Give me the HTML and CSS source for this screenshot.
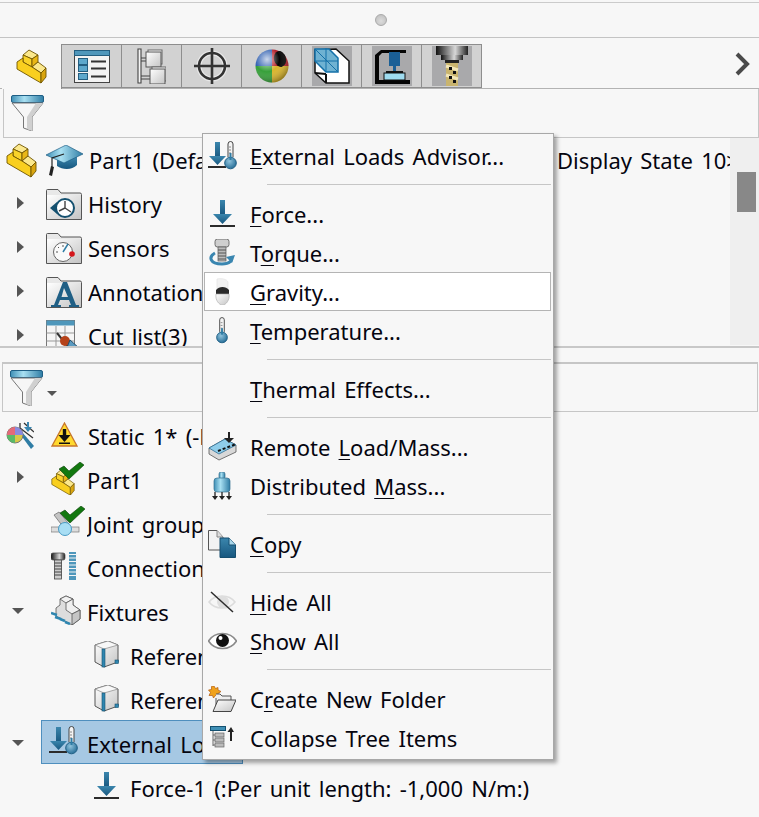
FILE: index.html
```html
<!DOCTYPE html>
<html lang="en">
<head>
<meta charset="utf-8">
<title>Simulation tree</title>
<link rel="stylesheet" href="styles.css">
</head>
<body>
<svg class="defs" width="0" height="0" aria-hidden="true">
  <defs>
    <linearGradient id="gb" x1="0" y1="0" x2="0" y2="1"><stop offset="0" stop-color="#3b86ad"/><stop offset="1" stop-color="#17577f"/></linearGradient>
    <linearGradient id="gf" x1="0" y1="0" x2="1" y2="0"><stop offset="0" stop-color="#3f8fb5"/><stop offset=".4" stop-color="#a9e0f2"/><stop offset="1" stop-color="#2f7da5"/></linearGradient>
    <linearGradient id="gw" x1="0" y1="0" x2="1" y2="1"><stop offset="0" stop-color="#ffffff"/><stop offset="1" stop-color="#c4c4c4"/></linearGradient>
    <linearGradient id="gc" x1="0" y1="0" x2="1" y2="0"><stop offset="0" stop-color="#111"/><stop offset=".6" stop-color="#d8d8d8"/><stop offset="1" stop-color="#222"/></linearGradient>
    <radialGradient id="gball" cx=".35" cy=".3" r=".75"><stop offset="0" stop-color="#fff" stop-opacity=".75"/><stop offset=".5" stop-color="#fff" stop-opacity="0"/><stop offset="1" stop-color="#000" stop-opacity=".35"/></radialGradient>
    <radialGradient id="gbulb" cx=".4" cy=".35" r=".7"><stop offset="0" stop-color="#8fc3dd"/><stop offset="1" stop-color="#226a94"/></radialGradient>

    <symbol id="part" viewBox="0 0 31 35">
      <g stroke="#6f5500" stroke-width=".9" stroke-linejoin="round">
        <polygon points="7,6 13,1 22,6 16,10" fill="#fbe88c"/>
        <polygon points="7,6 16,10 16,18 7,13" fill="#f9d32a"/>
        <polygon points="16,10 22,6 22,13 16,18" fill="#e9b716"/>
        <polygon points="16,18 22,13 30,19 25,24" fill="#fbe88c"/>
        <polygon points="1,13 7,9 7,13 16,18 25,24 25,34 1,20" fill="#f9cf1f"/>
        <polygon points="25,24 30,19 30,28 25,34" fill="#d9a50f"/>
      </g>
    </symbol>
    <symbol id="check" viewBox="0 0 25 17">
      <polygon points="0,7 5,4 10,9 21,0 25,3 10,17" fill="#12780f" stroke="#0b3f0a" stroke-width=".6"/>
    </symbol>
    <symbol id="funnel" viewBox="0 0 33 36">
      <rect x=".5" y=".5" width="32" height="7" rx="1.5" fill="url(#gf)" stroke="#1f5f85"/>
      <path d="M1 8 L12.500 22 V33 L21 36 V22 L32 8 Z" fill="#f6f6f6" stroke="#777"/>
      <path d="M21 22 L32 8 H25 L16 22 V34 L21 36 Z" fill="#d0d0d0"/>
    </symbol>
    <symbol id="thermo" viewBox="0 0 13 29">
      <path d="M4 16 V3 a2.500 2.500 0 0 1 5 0 V16" fill="#f4f4f4" stroke="#444"/>
      <path d="M5 6h2M5 9h2M5 12h2" stroke="#888"/>
      <circle cx="6.500" cy="22" r="5.800" fill="url(#gbulb)" stroke="#1f5f85"/>
      <rect x="5.500" y="12" width="2" height="7" fill="#2f7da5"/>
    </symbol>
    <symbol id="force" viewBox="0 0 25 28">
      <rect x="10" y="0" width="5" height="15" fill="url(#gb)"/>
      <polygon points="3,14 22,14 12.500,24" fill="url(#gb)"/>
      <rect x="0" y="25" width="25" height="2" fill="#2b2b2b"/>
    </symbol>
    <symbol id="extload" viewBox="0 0 29 29">
      <rect x="7" y="1" width="5" height="16" fill="url(#gb)"/>
      <polygon points="1,15 18,15 9.500,24" fill="url(#gb)"/>
      <rect x="0" y="25" width="18" height="2" fill="#2b2b2b"/>
      <use href="#thermo" x="16" y="0" width="13" height="29"/>
    </symbol>
    <symbol id="torque" viewBox="0 0 26 27">
      <rect x="6" y="0" width="14" height="8" rx="2.500" fill="#cfcfcf" stroke="#555" stroke-width=".8"/>
      <rect x="9" y="8" width="8" height="14" fill="#bbb" stroke="#555" stroke-width=".7"/>
      <path d="M9 11h8M9 14h8M9 17h8M9 20h8" stroke="#555"/>
      <path d="M6 14 C-1 18 1 25 13 25 C21 25 24 21 22 18" fill="none" stroke="#3a86b0" stroke-width="3"/>
      <polygon points="17,18 26,16 23,24" fill="#3a86b0"/>
    </symbol>
    <symbol id="gravity" viewBox="0 0 15 27">
      <path d="M2 1 C6 0 12 1 13 4 L13 11 L2 11 Z" fill="#f2f2f2" stroke="#e4e4e4" stroke-width=".7"/>
      <path d="M1 12 C4 8 11 8 14 12 L14 16 L1 16 Z" fill="#2a2a2a"/>
      <path d="M1 16 H14 C15 22 11 27 7.500 27 C4 27 0 22 1 16 Z" fill="url(#gw)" stroke="#aaa" stroke-width=".6"/>
    </symbol>
    <symbol id="remote" viewBox="0 0 29 29">
      <polygon points="1,16 17,7 28,13 28,20 11,28 1,22" fill="#d8d8d8" stroke="#555" stroke-width=".8"/>
      <polygon points="1,16 17,7 28,13 11,22" fill="#8fcdea" stroke="#2f6f95" stroke-width=".8"/>
      <path d="M10 19 L28 12" stroke="#111" stroke-width="2" stroke-dasharray="3 2"/>
      <path d="M21 0 V8" stroke="#222" stroke-width="2"/>
      <polygon points="16,6 26,6 21,11" fill="#222"/>
    </symbol>
    <symbol id="dist" viewBox="0 0 20 28">
      <rect x="7" y="0" width="6" height="7" rx="2" fill="url(#gf)" stroke="#33708f" stroke-width=".7"/>
      <rect x="2" y="6" width="16" height="14" rx="3" fill="url(#gf)" stroke="#33708f" stroke-width=".7"/>
      <path d="M3 20 V25 M10 20 V25 M17 20 V25" stroke="#222" stroke-width="1.300"/>
      <path d="M0 24 H6 L3 28Z M7 24 H13 L10 28Z M14 24 H20 L17 28Z" fill="#222"/>
    </symbol>
    <symbol id="copy" viewBox="0 0 28 28">
      <path d="M.5 .5 H9 L15 7 V20 H.5 Z" fill="#f3f3f3" stroke="#555"/>
      <path d="M9 .5 V7 H15" fill="#ddd" stroke="#888"/>
      <path d="M12 8 H21 L27.500 15 V27.500 H12 Z" fill="url(#gb)" stroke="#164f70"/>
      <path d="M21 8 V15 H27.500" fill="#a9d6ea" stroke="#164f70"/>
    </symbol>
    <symbol id="eye" viewBox="0 0 29 20">
      <path d="M.5 10 C7 0 22 0 28.500 10 C22 20 7 20 .5 10 Z" fill="#fff" stroke="#8a8a8a" stroke-width="1.600"/>
      <circle cx="14.500" cy="9.500" r="6.500" fill="#111"/>
      <circle cx="12.500" cy="7" r="2" fill="#fff"/>
    </symbol>
    <symbol id="hide" viewBox="0 0 28 22">
      <path d="M1 11 C7 3 21 3 27 11 C21 19 7 19 1 11 Z" fill="#f6f6f6" stroke="#dcdcdc" stroke-width="1.600"/>
      <circle cx="15" cy="11" r="6" fill="#dedede"/>
      <path d="M3 1 L25 21" stroke="#2c2c2c" stroke-width="1.500"/>
    </symbol>
    <symbol id="newf" viewBox="0 0 28 26">
      <path d="M6 0 L7.500 2.500 L10 1.500 L10 4 L13 5.500 L10 7.500 L10.500 10.500 L7.500 9.500 L5.500 12 L4.500 9.500 L1 9.500 L2.500 6.500 L.5 4 L3.500 3.500 L3.500 .5 Z" fill="#f0a21c" stroke="#b25a10" stroke-width=".7"/>
      <path d="M8 13 V26 H23 L23 11 H14 L12 9 H8" fill="#eee" stroke="#555" transform="translate(0,-1)"/>
      <path d="M10 14 H28 L23 25.500 H5 Z" fill="url(#gw)" stroke="#444"/>
    </symbol>
    <symbol id="collapse" viewBox="0 0 24 23">
      <rect x=".5" y=".5" width="15" height="4" fill="#3f8fb5" stroke="#14506f"/>
      <path d="M3 5 V20 M3 9 H5 M3 14 H5 M3 19 H5" stroke="#666" fill="none"/>
      <rect x="5" y="7" width="9" height="4" fill="#bbb" stroke="#666" stroke-width=".7"/>
      <rect x="5" y="12" width="9" height="4" fill="#bbb" stroke="#666" stroke-width=".7"/>
      <rect x="5" y="17" width="9" height="4" fill="#bbb" stroke="#666" stroke-width=".7"/>
      <rect x="20" y="5" width="2" height="10" fill="#222"/>
      <polygon points="17.500,6 24,6 21,1" fill="#222"/>
    </symbol>
    <symbol id="folder" viewBox="0 0 36 31">
      <path d="M.5 30.500 V1.500 Q.5 .5 1.500 .5 H12 L15 4 H34 Q35.500 4 35.500 5.500 V30.500 Z" fill="#e8e8e8" stroke="#555"/>
      <rect x="1" y="6" width="34" height="24" fill="url(#gw)"/>
    </symbol>
    <symbol id="refcube" viewBox="0 0 25 27">
      <polygon points="1,4 14,0 24,4 24,21 10,26 1,21" fill="url(#gw)" stroke="#555"/>
      <polygon points="1,4 10,8 24,4 14,0" fill="#f8f8f8" stroke="#888" stroke-width=".7"/>
      <rect x="8" y="8" width="3" height="18" fill="#2f86b0" stroke="#14506f" stroke-width=".6"/>
      <rect x="21" y="19" width="3.500" height="3.500" fill="#2f86b0" stroke="#14506f" stroke-width=".6"/>
    </symbol>
  </defs>
</svg>

<header class="grip-bar"><span class="grip"></span></header>

<nav class="tabs">
  <div class="tab tab-active"><svg class="part-tab" width="31" height="35"><use href="#part"/></svg></div>
  <div class="tab">
    <svg width="36" height="33" viewBox="0 0 36 33">
      <rect x=".5" y=".5" width="35" height="32" fill="#f3f3f3" stroke="#444"/>
      <rect x=".5" y=".5" width="35" height="5" fill="#4f97bb" stroke="#245e80"/>
      <g fill="#5ea8cc" stroke="#245e80"><rect x="4.500" y="8.500" width="9" height="6"/><rect x="4.500" y="15.500" width="9" height="6"/><rect x="4.500" y="23.500" width="9" height="6"/></g>
      <path d="M17 11.500H32M17 18.500H32M17 26.500H32" stroke="#333" stroke-width="2"/>
    </svg>
  </div>
  <div class="tab">
    <svg width="29" height="36" viewBox="0 0 29 36">
      <path d="M1 1 H4 V35 H1 Z M4 10 H10 M4 28 H13" fill="#f4f4f4" stroke="#444" stroke-width="1.100"/>
      <path d="M4 13 H10 M4 31 H13" stroke="#444"/>
      <rect x="11" y="2" width="14" height="14" fill="#fff" stroke="#666"/>
      <rect x="9" y="4" width="15" height="15" fill="url(#gw)" stroke="#555"/>
      <rect x="15" y="19" width="14" height="14" fill="#fff" stroke="#666"/>
      <rect x="13" y="21" width="15" height="15" fill="url(#gw)" stroke="#555"/>
    </svg>
  </div>
  <div class="tab">
    <svg width="38" height="38" viewBox="0 0 38 38">
      <circle cx="19" cy="19" r="13" fill="none" stroke="#fff" stroke-width="5" opacity=".5"/>
      <circle cx="19" cy="19" r="13" fill="none" stroke="#333" stroke-width="2.600"/>
      <path d="M19 1 V37 M1 19 H37" stroke="#333" stroke-width="2.600"/>
    </svg>
  </div>
  <div class="tab">
    <svg width="34" height="34" viewBox="0 0 34 34">
      <path d="M17 17 L17 .5 A16.500 16.500 0 0 0 .5 17 Z" fill="#2f5fb0"/>
      <path d="M17 17 L.5 17 A16.500 16.500 0 0 0 17 33.500 Z" fill="#37a03a"/>
      <path d="M17 17 L17 33.500 A16.500 16.500 0 0 0 33.500 17 Z" fill="#d9b52c"/>
      <path d="M17 17 L33.500 17 A16.500 16.500 0 0 0 17 .5 Z" fill="#b3202a"/>
      <ellipse cx="25" cy="10" rx="6" ry="8" transform="rotate(-15 25 10)" fill="#070707"/>
      <circle cx="17" cy="17" r="16.500" fill="url(#gball)"/>
    </svg>
  </div>
  <div class="tab">
    <span class="tile">
      <svg width="40" height="40" viewBox="0 0 40 40">
        <polygon points="3,4 24,3 37,15 37,37 14,37 3,27" fill="#fff" stroke="#111" stroke-width="1.500"/>
        <path d="M14 37 V28 M3 27 L14 28" stroke="#111" stroke-width="2"/>
        <polygon points="3,3 17,3 26,12 26,26 14,26 3,15" fill="#6fb2d2" stroke="#1470a8" stroke-width="1.500"/>
        <path d="M3 3 L26 26 M14 2 V26 M3 15 H26" stroke="#1470a8" stroke-width="1"/>
      </svg>
    </span>
  </div>
  <div class="tab">
    <span class="tile">
      <svg width="40" height="40" viewBox="0 0 40 40">
        <path d="M34 4 H9 L3 9 V38 H38 V34 H7 V10 L10 7 H34 Z" fill="#050505"/>
        <rect x="17" y="6" width="11" height="14" fill="#1a5f96"/>
        <rect x="21" y="20" width="3" height="6" fill="#1a5f96"/>
        <rect x="14" y="25" width="17" height="2" fill="#111"/>
        <rect x="12" y="27" width="21" height="7" fill="#9fdcf0" stroke="#111"/>
      </svg>
    </span>
  </div>
  <div class="tab">
    <span class="tile">
      <svg width="40" height="40" viewBox="0 0 40 40">
        <rect x="4" y="0" width="32" height="9" fill="url(#gc)"/>
        <rect x="9" y="9" width="22" height="5" fill="url(#gc)"/>
        <rect x="13" y="14" width="14" height="3" fill="#222"/>
        <rect x="14" y="17" width="12" height="23" fill="#c9b46e"/>
        <path d="M14 20 L26 24 M14 29 L26 33" stroke="#f3e7b8" stroke-width="3"/>
        <path d="M17 21 h3 v3 h-3z M21 25 h3 v3 h-3z M17 30 h3 v3 h-3z M21 34 h3 v3 h-3z" fill="#111"/>
      </svg>
    </span>
  </div>
  <svg class="chevron" width="15" height="24" viewBox="0 0 15 24"><path d="M2 2 L12 12 L2 22" fill="none" stroke="#4a4a4a" stroke-width="4"/></svg>
</nav>

<div class="filter filter-top"><svg width="33" height="36"><use href="#funnel"/></svg></div>

<section class="tree tree-top">
  <div class="tree-rows">
    <div class="row">
      <span class="twist"><svg class="root-part" width="31" height="35"><use href="#part"/></svg></span>
      <span class="ico">
        <svg width="38" height="31" viewBox="0 0 38 31">
          <path d="M11 13 V21 C17 25 26 25 31 20 V12 Z" fill="url(#gb)"/>
          <polygon points="0,10 20,0 37,9 18,18" fill="url(#gf)" stroke="#1f5f85" stroke-width=".7"/>
          <path d="M18 9 L6 13 V22" stroke="#222" stroke-width="1.200" fill="none"/>
          <polygon points="5,21 8,22 6,31 3,30" fill="#222"/>
        </svg>
      </span>
      <span class="label clip clip-root">Part1 (Default</span>
      <span class="label label-state">Display State 10&gt;)</span>
    </div>
    <div class="row">
      <span class="twist"><i class="tri-r"></i></span>
      <span class="ico">
        <svg width="36" height="31" viewBox="0 0 36 31">
          <use href="#folder" width="36" height="31"/>
          <circle cx="19" cy="19" r="9" fill="#fff" stroke="#14506f" stroke-width="2"/>
          <polygon points="4,19 11,13 11,25" fill="#14506f"/>
          <path d="M19 19 V12 M19 19 L25 23 M19 19 L13 22" stroke="#444" stroke-width="1.400"/>
        </svg>
      </span>
      <span class="label">History</span>
    </div>
    <div class="row">
      <span class="twist"><i class="tri-r"></i></span>
      <span class="ico">
        <svg width="36" height="31" viewBox="0 0 36 31">
          <use href="#folder" width="36" height="31"/>
          <circle cx="17" cy="19" r="9.500" fill="#fafafa" stroke="#666"/>
          <path d="M17 19 L22 11" stroke="#2f7da5" stroke-width="1.500"/>
          <path d="M10 19h2M17 12v2M12 14l1 1" stroke="#555"/>
          <circle cx="26" cy="21" r="2.800" fill="#d4161c"/>
        </svg>
      </span>
      <span class="label">Sensors</span>
    </div>
    <div class="row">
      <span class="twist"><i class="tri-r"></i></span>
      <span class="ico">
        <svg width="36" height="31" viewBox="0 0 36 31">
          <use href="#folder" width="36" height="31"/>
          <path d="M17 5 H21 L30 28 H33 V30 H23 V28 H25 L23 23 H14 L12 28 H15 V30 H5 V28 H8 Z M18 11 L15.500 20 H22 Z" fill="#1f5f85" fill-rule="evenodd"/>
        </svg>
      </span>
      <span class="label clip">Annotations</span>
    </div>
    <div class="row">
      <span class="twist"><i class="tri-r"></i></span>
      <span class="ico">
        <svg class="cut" width="34" height="36" viewBox="0 0 34 36">
          <rect x=".5" y=".5" width="28" height="30" fill="#f6f6f6" stroke="#777"/>
          <rect x=".5" y=".5" width="28" height="5" fill="#4f97bb"/>
          <path d="M.5 13H28M.5 21H28M10 6V31M19 6V31" stroke="#999"/>
          <path d="M11 13 L28 34" stroke="#333" stroke-width="2"/>
          <circle cx="19" cy="21" r="5" fill="#b5421a"/>
          <path d="M24 20 L33 28 L28 36 L20 30 Z" fill="#5a9ac0" stroke="#224f6d"/>
        </svg>
      </span>
      <span class="label">Cut list(3)</span>
    </div>
  </div>
  <div class="scroll"><span class="thumb"></span></div>
</section>

<div class="split"></div>

<div class="filter filter-bottom">
  <svg width="33" height="36"><use href="#funnel"/></svg>
  <i class="tri-small"></i>
</div>

<section class="tree tree-bottom">
  <div class="row">
    <span class="twist">
      <svg class="lens" width="28" height="29" viewBox="0 0 28 29">
        <path d="M14 14 L25 29 L28 26 L16 12" fill="#2f7da5"/>
        <path d="M14 8 L27 18 M18 3 L28 12 M14 3 V14" stroke="#333" stroke-width="1.300"/>
        <circle cx="9" cy="15" r="8" fill="#d7c94a" stroke="#777"/>
        <path d="M9 15 L9 7 A8 8 0 0 0 1 15 Z" fill="#e46a7a"/>
        <path d="M9 15 L1 15 A8 8 0 0 0 9 23 Z" fill="#5aba6a"/>
        <path d="M9 15 L17 15 A8 8 0 0 0 9 7 Z" fill="#8a8ae0"/>
        <path d="M22 2 V9" stroke="#3a86b0" stroke-width="2"/>
        <polygon points="18,7 26,7 22,12" fill="#3a86b0"/>
      </svg>
    </span>
    <span class="ico ico-warn">
      <svg width="27" height="25" viewBox="0 0 27 25">
        <polygon points="13.500,1 26,24 1,24" fill="#ffd92e" stroke="#c8762a" stroke-width="1.300"/>
        <rect x="11.800" y="7" width="3.400" height="8" fill="#111"/>
        <polygon points="7.500,13 19.500,13 13.500,20" fill="#111"/>
        <rect x="8" y="20.500" width="11" height="1.500" fill="#111"/>
      </svg>
    </span>
    <span class="label clip">Static 1* (-Default-)</span>
  </div>
  <div class="row row-b">
    <span class="twist"><i class="tri-r"></i></span>
    <span class="ico ico-b">
      <svg width="33" height="33" viewBox="0 0 33 33">
        <use href="#part" x="0" y="7" width="24" height="27"/>
        <use href="#check" x="8" y="0" width="25" height="17"/>
      </svg>
    </span>
    <span class="label">Part1</span>
  </div>
  <div class="row row-b">
    <span class="twist"></span>
    <span class="ico ico-b">
      <svg width="34" height="32" viewBox="0 0 34 32">
        <path d="M3 9 L8 6 L18 18 L13 22 Z" fill="#c4c4c4" stroke="#666" stroke-width=".7"/>
        <rect x="0" y="21" width="28" height="5" fill="#ddd" stroke="#777" stroke-width=".7"/>
        <circle cx="14" cy="23" r="6.500" fill="#a8def4" stroke="#4a9bc4"/>
        <use href="#check" x="9" y="0" width="25" height="17"/>
      </svg>
    </span>
    <span class="label clip">Joint groups</span>
  </div>
  <div class="row row-b">
    <span class="twist"></span>
    <span class="ico ico-b">
      <svg class="conn" width="27" height="28" viewBox="0 0 27 28">
        <rect x="0" y="1" width="14" height="7" rx="2" fill="url(#gc)" stroke="#444" stroke-width=".7"/>
        <rect x="3.500" y="8" width="7" height="19" fill="#ccc" stroke="#444" stroke-width=".8"/>
        <path d="M3.500 11h7M3.500 14h7M3.500 17h7M3.500 20h7M3.500 23h7" stroke="#444"/>
        <rect x="18" y="0" width="7" height="28" fill="#4f97bb"/>
        <path d="M18 2.500h8M18 6h8M18 9.500h8M18 13h8M18 16.500h8M18 20h8M18 23.500h8" stroke="#f4f4f4"/>
      </svg>
    </span>
    <span class="label clip">Connections</span>
  </div>
  <div class="row row-b">
    <span class="twist"><i class="tri-d"></i></span>
    <span class="ico ico-b">
      <svg class="fix" width="30" height="30" viewBox="0 0 30 30">
        <g fill="#ddd" stroke="#555" stroke-width=".8">
          <polygon points="9,4 15,1 22,4 22,10 29,15 29,24 21,30 5,21 5,13 9,10"/>
          <polygon points="9,4 15,8 22,4 15,1" fill="#f2f2f2"/>
          <polygon points="15,8 15,15 21,19 29,15 22,10 22,4" fill="#efefef"/>
          <polygon points="21,19 21,30 29,24 29,15" fill="#c5c5c5"/>
        </g>
        <path d="M0 18 L6 20 M4 22 L10 24 M9 24 L14 26 M14 27 L19 29" stroke="#2f86b0" stroke-width="2.500"/>
      </svg>
    </span>
    <span class="label">Fixtures</span>
  </div>
  <div class="row row-c">
    <span class="ico ico-c"><svg width="25" height="27"><use href="#refcube"/></svg></span>
    <span class="label clip clip-c">Reference Geometry-1</span>
  </div>
  <div class="row row-c">
    <span class="ico ico-c"><svg width="25" height="27"><use href="#refcube"/></svg></span>
    <span class="label clip clip-c">Reference Geometry-2</span>
  </div>
  <div class="row row-b">
    <span class="twist"><i class="tri-d"></i></span>
    <span class="selected">
      <span class="ico ico-s"><svg width="29" height="29"><use href="#extload"/></svg></span>
      <span class="label clip label-sel">External Loads</span>
    </span>
  </div>
  <div class="row row-c">
    <span class="ico ico-c"><svg width="25" height="28"><use href="#force"/></svg></span>
    <span class="label">Force-1 (:Per unit length: -1,000 N/m:)</span>
  </div>
</section>

<aside class="menu">
  <div class="item"><span class="mi"><svg width="29" height="29"><use href="#extload"/></svg></span><span><u>E</u>xternal Loads Advisor...</span></div>
  <div class="sep"></div>
  <div class="item"><span class="mi"><svg width="25" height="28"><use href="#force"/></svg></span><span><u>F</u>orce...</span></div>
  <div class="item"><span class="mi"><svg width="26" height="27"><use href="#torque"/></svg></span><span>T<u>o</u>rque...</span></div>
  <div class="item item-hover"><span class="mi"><svg width="15" height="27"><use href="#gravity"/></svg></span><span><u>G</u>ravity...</span></div>
  <div class="item"><span class="mi"><svg width="12" height="27"><use href="#thermo"/></svg></span><span><u>T</u>emperature...</span></div>
  <div class="sep"></div>
  <div class="item"><span class="mi"></span><span><u>T</u>hermal Effects...</span></div>
  <div class="sep"></div>
  <div class="item"><span class="mi"><svg width="29" height="29"><use href="#remote"/></svg></span><span>Remote <u>L</u>oad/Mass...</span></div>
  <div class="item"><span class="mi"><svg width="20" height="28"><use href="#dist"/></svg></span><span>Distributed <u>M</u>ass...</span></div>
  <div class="sep"></div>
  <div class="item"><span class="mi"><svg width="28" height="28"><use href="#copy"/></svg></span><span><u>C</u>opy</span></div>
  <div class="sep"></div>
  <div class="item"><span class="mi"><svg width="28" height="22"><use href="#hide"/></svg></span><span><u>H</u>ide All</span></div>
  <div class="item"><span class="mi"><svg width="29" height="20"><use href="#eye"/></svg></span><span><u>S</u>how All</span></div>
  <div class="sep"></div>
  <div class="item"><span class="mi"><svg width="28" height="26"><use href="#newf"/></svg></span><span>C<u>r</u>eate New Folder</span></div>
  <div class="item"><span class="mi"><svg width="24" height="23"><use href="#collapse"/></svg></span><span>Collapse Tree Items</span></div>
</aside>
</body>
</html>
```

FILE: styles.css
```css
* { box-sizing: border-box; }
html, body { margin: 0; padding: 0; }
body {
  position: relative;
  width: 759px;
  height: 817px;
  overflow: hidden;
  background: #f7f7f7;
  color: #05050f;
  font-family: "Noto Sans", "Open Sans", sans-serif;
  font-size: 22px;
  word-spacing: 2.5px;
}
svg { display: block; flex: none; }
.defs { height: 0; width: 0; overflow: hidden; }

.grip-bar {
  margin-top: 2px;
  height: 36px;
  border-top: 1px solid #cbcbcb;
  border-bottom: 1px solid #c4c4c4;
  display: flex;
  align-items: center;
  justify-content: center;
}
.grip {
  width: 12px;
  height: 12px;
  margin-left: 2px;
  border-radius: 50%;
  background: radial-gradient(circle at 50% 60%, #dcdcdc, #bcbcbc);
  border: 1px solid #a9a9a9;
}

.tabs {
  margin-top: 6px;
  padding-left: 2px;
  height: 45px;
  display: flex;
  align-items: stretch;
  border-bottom: 1px solid #b3b3b3;
}
.tab {
  width: 60px;
  height: 44px;
  display: flex;
  align-items: center;
  justify-content: center;
  background: #d2d2d2;
  border: 1px solid #8e8e8e;
  border-left: 0;
}
.tab-active {
  background: #f7f7f7;
  border: 0;
  border-right: 1px solid #8e8e8e;
  height: 45px;
  margin-bottom: -1px;
  position: relative;
}
.tile {
  width: 40px;
  height: 40px;
  background: #a9a9ab;
}
.chevron { margin: 8px 9px 0 auto; }

.filter {
  display: flex;
  align-items: center;
  border: 1px solid #c6c6c6;
  background: #f7f7f7;
}
.filter-top {
  margin-left: 3px;
  width: 756px;
  height: 49px;
  border-top: 0;
  padding-left: 7px;
}
.filter-bottom {
  margin: 14px 0 0 2px;
  width: 756px;
  height: 50px;
  border-top: 2px solid #c6c6c6;
  padding-left: 7px;
}
.tri-small {
  margin: 12px 0 0 4px;
  border-style: solid;
  border-width: 5px 5px 0;
  border-color: #555 transparent transparent;
}

.tree-top {
  height: 208px;
  display: flex;
  overflow: hidden;
}
.tree-rows { width: 730px; overflow: hidden; }
.scroll {
  width: 29px;
  height: 207px;
  background: #efefef;
  padding: 34px 3px 0 7px;
}
.thumb { display: block; width: 19px; height: 40px; background: #888; }
.split { height: 2px; background: #c8c8c8; }

.tree-bottom { padding-top: 2px; }
.tree-bottom .twist svg,
.tree-bottom .ico > svg { margin-top: -4px; }
.tree-bottom .tri-r { margin-top: -6px; }

.row {
  display: flex;
  align-items: center;
  height: 44px;
  white-space: nowrap;
}
.twist {
  width: 41px;
  flex: none;
  display: flex;
  align-items: center;
}
.root-part { margin-left: 6px; }
.lens { margin-left: 6px; }
.tri-r {
  margin: -2px 0 0 17px;
  border-style: solid;
  border-width: 6px 0 6px 7px;
  border-color: transparent transparent transparent #555;
}
.tri-d {
  margin: -2px 0 0 12px;
  border-style: solid;
  border-width: 6px 6.500px 0;
  border-color: #555 transparent transparent;
}
.ico {
  width: 47px;
  flex: none;
  padding-left: 5px;
}
.ico-warn { padding-left: 10px; }
.ico-b { width: 46px; padding-left: 10px; }
.ico-c { width: 130px; padding-left: 94px; }
.selected .ico { width: 45px; padding-left: 7px; }
.selected {
  display: flex;
  align-items: center;
  width: 202px;
  height: 44px;
  margin-top: -4px;
  background: #a6c8e3;
  border: 1px solid #4f8fbe;
}
.clip { width: 115px; overflow: hidden; flex: none; }
.clip-root { width: 114px; margin-left: 1px; }
.clip-c { width: 72px; }
.label-sel { padding-top: 4px; }
.label-state { margin-left: 354px; }
.cut { margin-top: 4px; }

.menu {
  position: absolute;
  left: 202px;
  top: 133px;
  width: 352px;
  height: 627px;
  padding: 2px 2px 0 1px;
  background: #f7f7f7;
  border: 1px solid #a8a8a8;
  box-shadow: 3px 3px 4px rgba(0, 0, 0, .35);
}
.item {
  display: flex;
  align-items: center;
  height: 39px;
  white-space: nowrap;
}
.item-hover {
  background: #fff;
  outline: 1px solid #b4b4b4;
  outline-offset: -1px;
}
.mi {
  width: 36px;
  margin-right: 10px;
  display: flex;
  align-items: center;
  justify-content: center;
}
.sep {
  height: 1px;
  margin: 9px 0 9px 63px;
  background: #c6c6c6;
}
u {
  text-decoration-thickness: 1px;
  text-underline-offset: 3px;
}
```
